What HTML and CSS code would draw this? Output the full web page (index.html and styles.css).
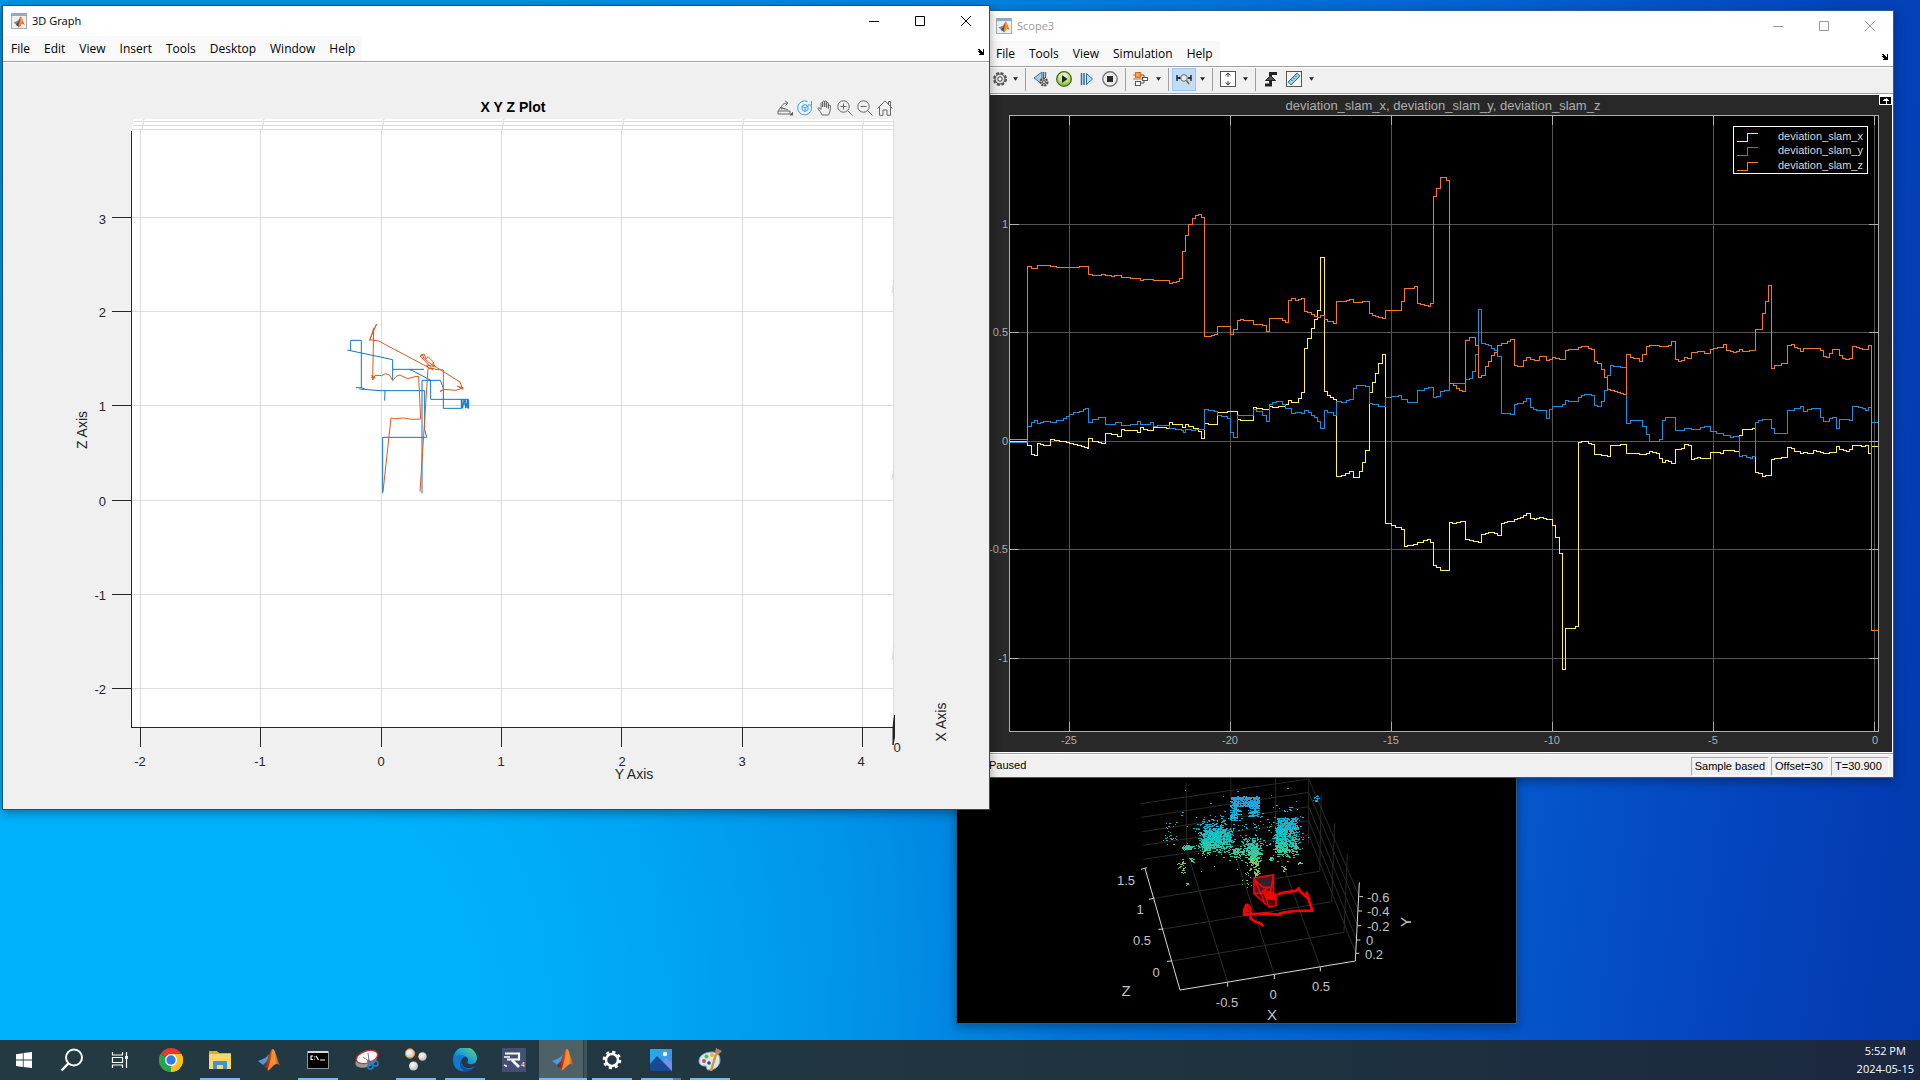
FILE: index.html
```html
<!DOCTYPE html>
<html lang="en">
<head>
<meta charset="utf-8">
<title>Desktop</title>
<link rel="stylesheet" href="styles.css">
</head>
<body>
<svg class="defs" aria-hidden="true">
  <defs>
    <linearGradient id="peak" x1="0" y1="0" x2="1" y2="0">
      <stop offset="0" stop-color="#7a1f10"/><stop offset=".4" stop-color="#d8461b"/><stop offset=".6" stop-color="#f9a23a"/><stop offset="1" stop-color="#b52a12"/>
    </linearGradient>
    <linearGradient id="edgeg" x1="0" y1="1" x2="1" y2="0">
      <stop offset="0" stop-color="#0b59a8"/><stop offset=".5" stop-color="#1f9fdc"/><stop offset="1" stop-color="#62dc5c"/>
    </linearGradient>
    <linearGradient id="photo" x1="0" y1="0" x2="1" y2="1">
      <stop offset="0" stop-color="#22aef0"/><stop offset="1" stop-color="#4b87dd"/>
    </linearGradient>
    <radialGradient id="ball" cx=".4" cy=".35" r=".7">
      <stop offset="0" stop-color="#fff"/><stop offset="1" stop-color="#b9b9b9"/>
    </radialGradient>
    <radialGradient id="green" cx=".5" cy=".3" r=".7">
      <stop offset="0" stop-color="#f4fbe6"/><stop offset=".6" stop-color="#b9e07a"/><stop offset="1" stop-color="#6fae2a"/>
    </radialGradient>
    <symbol id="matlab" viewBox="0 0 24 24">
      <path d="M1 13 L7 10.500 C9 10 10 8 12 6 L10 15 L6 17 Z" fill="#4a9ad4"/>
      <path d="M6 17 L10 13 L13 5 L11 18 L8 20 Z" fill="#1d4f80"/>
      <path d="M7 18 C11 15 13 1 16 1 C18 1 20 12 23.500 18 C20 15 18 16 16 18 C14 21 12 23 10.500 22.500 C10 20 9 18 7 18 Z" fill="url(#peak)"/>
      <path d="M16 1 C14.500 6 13.500 14 10.500 22.500 C13 22 14 19 16 17 C17 12 16.500 6 16 1 Z" fill="#f58b2b"/>
    </symbol>
    <symbol id="appicon" viewBox="0 0 16 16">
      <rect x=".5" y=".5" width="15" height="15" fill="#eef0f2" stroke="#a3adb8"/>
      <rect x="0" y="0" width="16" height="3" fill="#8fabc9"/>
      <use href="#matlab" x="2" y="3" width="12" height="12"/>
    </symbol>
    <symbol id="dock" viewBox="0 0 8 8">
      <path d="M1 1h2v1h1v1h1v1h1V1h1v6H2V6h1V5H2V4H1V3h1V2H1z" fill="#000"/>
    </symbol>
    <symbol id="caret" viewBox="0 0 6 4"><path d="M0 0H6L3 4Z" fill="#222"/></symbol>
  </defs>
</svg>

<main class="desktop">

  <section class="window cloud" aria-label="Point cloud">
    <svg class="figure" viewBox="957 641 559 382" role="img" aria-label="Point cloud map">
      <svg x="1080" y="770" width="380" height="260" viewBox="0 0 1140 780" class="cloud-art">
        <path class="cloud-grid" d="M223 385L719 304M250 477L755 395M275 573L792 487M443 637L320 240M583 614L455 220M721 592L586 220M318 38L320 240M452 0L455 220M587 0L586 220M181 101L686 27M184 142L686 67M187 185L686 110M190 226L686 152M190 268L686 195M686 0V222M724 72L719 304M764 160L755 395M802 253L792 487M686 27L838 380M686 67L836 423M686 110L833 467M686 152L830 510M686 195L828 550"/>
        <path class="cloud-axis" d="M195 295L300 660L826 573L838 337M183 298L201 293M207 388L223 385M235 478L250 477M261 574L275 573M443 637V650M583 614V627M721 592V604M838 380H849M835 423H846M833 467H844M830 510H841M828 550H838"/>
        <g id="points" shape-rendering="crispEdges"></g>
        <path d="M522 324L580 315L581 370L522 370Z" fill="#33202c" stroke="#f00" stroke-width="5"/>
        <path d="M522 324L553 395M580 318L570 375M524 330L550 352H578M522 370L560 405M545 365L566 352M553 360L588 374V406L566 411Z" fill="none" stroke="#f00" stroke-width="5"/>
        <path d="M550 368L588 374L586 392L556 388Z" fill="#f00"/>
        <path d="M566 392H584V406H566Z" fill="#5a0000"/>
        <path class="track" d="M592 373L610 368L650 362L655 355L662 366L684 385L680 368L688 395L697 422L640 423L600 430L594 435L560 430L492 434L493 418L500 404L508 410L512 430L512 446L528 456L540 460L550 468M496 412L504 428M672 374L690 388M580 433H605"/>
      </svg>
      <g class="cloud-labels">
        <text x="1126" y="885" text-anchor="middle">1.5</text>
        <text x="1140" y="914" text-anchor="middle">1</text>
        <text x="1142" y="945" text-anchor="middle">0.5</text>
        <text x="1156" y="977" text-anchor="middle">0</text>
        <text x="1227" y="1007" text-anchor="middle">-0.5</text>
        <text x="1273" y="999" text-anchor="middle">0</text>
        <text x="1321" y="991" text-anchor="middle">0.5</text>
        <text x="1367" y="902">-0.6</text>
        <text x="1367" y="916">-0.4</text>
        <text x="1367" y="931">-0.2</text>
        <text x="1366" y="945">0</text>
        <text x="1365" y="959">0.2</text>
      </g>
      <g class="cloud-names">
        <text x="1126" y="996" text-anchor="middle">Z</text>
        <text x="1272" y="1020" text-anchor="middle">X</text>
        <text transform="translate(1411 922) rotate(-90)" text-anchor="middle">Y</text>
      </g>
    </svg>
  </section>

  <section class="window scope" aria-label="Scope3">
    <header class="titlebar inactive">
      <svg class="app" aria-hidden="true"><use href="#appicon"/></svg>
      <h2>Scope3</h2>
      <div class="controls">
        <button aria-label="Minimize"><svg viewBox="0 0 10 10"><path d="M0 5.500H10"/></svg></button>
        <button aria-label="Maximize"><svg viewBox="0 0 10 10"><path d="M.5.5H9.500V9.500H.5Z"/></svg></button>
        <button aria-label="Close"><svg viewBox="0 0 10 10"><path d="M0 0L10 10M10 0L0 10"/></svg></button>
      </div>
    </header>
    <nav class="menubar">
      <div class="menus"><button>File</button><button>Tools</button><button>View</button><button>Simulation</button><button>Help</button></div>
      <button class="dock" aria-label="Dock"><svg><use href="#dock"/></svg></button>
    </nav>
    <div class="toolbar" role="toolbar" aria-label="Scope tools">
      <button aria-label="Configuration"><svg class="ico" viewBox="0 0 16 16"><circle cx="8" cy="8" r="6" fill="none" stroke="#555" stroke-width="2" stroke-dasharray="3 1.700"/><circle cx="8" cy="8" r="5" fill="#ddd" stroke="#444"/><circle cx="8" cy="8" r="2.200" fill="#fff" stroke="#444"/></svg></button>
      <button class="drop" aria-label="Configuration menu"><svg><use href="#caret"/></svg></button>
      <hr>
      <button class="wide" aria-label="Step back"><svg class="ico" viewBox="0 0 16 16"><path d="M1 7L9 1V13Z" fill="#a9cbe8" stroke="#3c6f9c"/><path d="M10.500 1V7M12.500 1V7" stroke="#3c6f9c" stroke-width="1.300"/><circle cx="11" cy="11" r="3.500" fill="#ccc" stroke="#444" stroke-width="2" stroke-dasharray="2 1"/><circle cx="11" cy="11" r="1.500" fill="#fff" stroke="#444"/></svg></button>
      <button class="wide" aria-label="Run"><svg class="ico" viewBox="0 0 16 16"><circle cx="8" cy="8" r="7.300" fill="url(#green)" stroke="#3f6b14" stroke-width="1.300"/><path d="M6 4V12L11.500 8Z" fill="#222"/></svg></button>
      <button class="wide" aria-label="Step forward"><svg class="ico" viewBox="0 0 16 16"><path d="M2.500 2V14M5 2V14" stroke="#2f6c9f" stroke-width="1.500"/><path d="M7.500 2.500V13.500L13.500 8Z" fill="#bcdcf4" stroke="#2f6c9f"/></svg></button>
      <button class="wide" aria-label="Stop"><svg class="ico" viewBox="0 0 16 16"><circle cx="8" cy="8" r="7.200" fill="#ececec" stroke="#777" stroke-width="1.400"/><path d="M5 5H11V11H5Z" fill="#2b2b2b"/></svg></button>
      <hr>
      <button class="wide" aria-label="Signal selector"><svg class="ico" viewBox="0 0 16 16"><path d="M7.500 4H11V6M7.500 12H11V10" fill="none" stroke="#555"/><rect x="2.500" y="1.500" width="5" height="5" fill="#f6a04c" stroke="#d9691a"/><rect x="9.500" y="6.500" width="5" height="3" fill="#fff" stroke="#555"/><rect x="2.500" y="10.500" width="5" height="4" fill="#fff" stroke="#555"/><path d="M0 4H2M0 8H9" stroke="#d9691a"/></svg></button>
      <button class="drop" aria-label="Signal menu"><svg><use href="#caret"/></svg></button>
      <hr>
      <button class="on" aria-label="Zoom X"><svg class="ico" viewBox="0 0 16 16"><path d="M1 4V10M15 4V10M1 7H5M15 7H12" stroke="#111" stroke-width="1.300"/><path d="M3 5.500L5 7L3 8.500" fill="#111"/><circle cx="8" cy="7" r="3.300" fill="#dff0fb" stroke="#666"/><path d="M10.500 9.500L13 13" stroke="#8b5a2b" stroke-width="1.500"/></svg></button>
      <button class="drop" aria-label="Zoom menu"><svg><use href="#caret"/></svg></button>
      <hr>
      <button class="wide" aria-label="Scale axes"><svg class="ico" viewBox="0 0 16 16"><rect x=".5" y=".5" width="15" height="15" fill="#fff" stroke="#555"/><path d="M8 2V6M8 10V14M5.500 4.500L8 2L10.500 4.500M5.500 11.500L8 14L10.500 11.500" fill="none" stroke="#333"/></svg></button>
      <button class="drop" aria-label="Scale menu"><svg><use href="#caret"/></svg></button>
      <hr>
      <button class="wide" aria-label="Triggers"><svg class="ico" viewBox="0 0 16 16"><path d="M2 14H7.500V2.500H14" fill="none" stroke="#222" stroke-width="3"/><path d="M2.500 9.500L7.500 4.500L12.500 9.500Z" fill="#555" stroke="#222"/></svg></button>
      <button class="wide" aria-label="Measurements"><svg class="ico" viewBox="0 0 16 16"><rect x=".5" y=".5" width="15" height="15" fill="#f4f4f4" stroke="#555"/><path d="M2 11L11 2L14 5L5 14Z" fill="#9fd0ea" stroke="#2d6f97"/><path d="M5 8.500L6.500 10M7 6.500L8.500 8M9 4.500L10.500 6" stroke="#2d6f97"/></svg></button>
      <button class="drop" aria-label="Measurements menu"><svg><use href="#caret"/></svg></button>
    </div>
    <div class="scope-view">
      <svg class="figure" viewBox="988 95 904 657" role="img" aria-label="deviation_slam_x, deviation_slam_y, deviation_slam_z">
        <rect x="1009" y="115" width="870" height="617" fill="#000"/>
        <g shape-rendering="crispEdges">
          <path class="scope-grid" d="M1069.500 116V731M1230.500 116V731M1391.500 116V731M1552.500 116V731M1713.500 116V731M1874.500 116V731M1010 224.500H1878M1010 332.500H1878M1010 441.500H1878M1010 549.500H1878M1010 658.500H1878"/>
          <path class="scope-axis" d="M1009.500 115.500H1878.500V731.500H1009.500ZM1069.500 116v9m0 597v9M1230.500 116v9m0 597v9M1391.500 116v9m0 597v9M1552.500 116v9m0 597v9M1713.500 116v9m0 597v9M1874.500 116v9m0 597v9M1010 224.500h9m850 0h9M1010 332.500h9m850 0h9M1010 441.500h9m850 0h9M1010 549.500h9m850 0h9M1010 658.500h9m850 0h9"/>
        </g>
        <svg class="series" x="990" y="160" width="460" height="320" viewBox="0 0 1380 960">
          <path class="sx" d="M59 844H113V856H124V883H134V886H142V850H151V853H160V856H182V838H194V841H209V844H229V847H238V850H250V853H262V856H274V859H284V862H293V865H296V835H307V844H325V847H334V850H346V820H364V823H382V829H394V808H403V811H442V817H451V802H460V808H472V811H490V802H530V805H538V787H547V793H577V802H586V793H595V799H610V805H625V814H634V835H644V790H655V793H683V757H713V754H743V778H752V781H791V742H800V745H818V748H838V739H848V742H866V739H887V733H895V721H904V727H925V715H934V697H944V565H953V535H964V505H973V478H982V451H991V292H1004V694H1013V706H1022V712H1031V718H1040V949H1055V946H1067V940H1079V934H1091V952H1109V934H1118V907H1127V871H1139V697H1148V667H1157V640H1166V610H1178V583H1187V1090H1205V1096H1215V1101H1234V1108H1243V1160H1253V1157H1271V1152H1282V1146H1300V1142H1313V1139H1320V1144"/>
          <path class="sy" d="M59 847H113V799H124V787H133V781H142V790H151V787H160V784H182V787H200V781H220V775H229V769H238V763H250V757H268V753H280V747H286V745H296V787H307V778H325V772H346V793H376V787H394V796H421V793H442V784H451V793H481V787H490V799H502V796H538V805H556V808H574V811H580V817H586V808H604V811H616V808H644V748H655V751H674V754H683V766H695V769H713V775H722V817H731V832H743V766H791V748H800V754H818V766H830V784H838V733H848V727H860V724H878V733H887V745H904V760H916V757H934V760H944V751H955V757H964V766H973V772H982V784H991V805H1004V751H1013V757H1031V766H1040V724H1055V727H1070V721H1079V718H1091V685H1100V676H1127V679H1139V730H1148V733H1166V739H1187V712H1205V709H1226V706H1235V718H1253V727H1283V691H1304V685H1316V682H1331V712H1340V709H1352V694H1363V691H1378V670"/>
          <path class="sz" d="M59 838H113V319H124V325H142V316H182V319H200V322H268V319H296V343H307V346H334V343H346V346H364V349H373V346H394V352H421V355H451V361H460V358H490V361H538V370H547V367H558V364H568V355H577V274H586V226H595V193H607V175H616V166H625V163H634V172H644V529H664V526H674V523H683V499H722V523H731V508H743V481H752V478H761V481H791V493H818V496H830V514H838V475H878V481H887V487H895V421H904V415H916V421H925V418H934V415H944V454H953V457H964V463H973V469H982V472H991V466H1004V478H1013V484H1031V490H1040V424H1070V421H1079V418H1091V427H1118V424H1139V460H1148V466H1157V469H1166V472H1178V475H1187V451H1235V424H1244V385H1274V379H1283V430H1292V433H1304V436H1316V439H1322V430H1331V109H1340V85H1352V52H1370V61H1378V670"/>
        </svg>
        <svg class="series" x="1430" y="280" width="460" height="400" viewBox="0 0 1380 1200">
          <path class="sx" d="M0 782V788H10V856H20V862H31V871H58V727H67V730H79V727H91V724H107V778H118V781H130V784H146V787H155V763H166V760H176V757H194V760H203V766H214V730H223V727H232V724H254V718H263V715H272V712H281V706H290V700H301V715H313V718H319V715H328V712H340V715H350V718H368V736H376V772H388V820H397V1168H407V1045H436V1039H446V487H455V484H475V490H484V493H494V523H514V526H532V529H541V496H571V493H589V520H628V523H650V520H658V514H668V517H680V520H689V535H698V547H707V541H716V544H725V550H737V508H755V505H764V493H776V496H784V538H793V535H803V532H812V535H841V517H871V520H880V511H913V514H928V466H937V448H967V445H976V577H985V580H997V589H1006V586H1024V538H1034V535H1054V532H1072V502H1084V505H1093V514H1111V520H1120V517H1132V520H1150V511H1160V514H1171V517H1180V520H1198V517H1219V499H1228V508H1240V511H1249V514H1258V508H1267V496H1293V499H1306V496H1315V520H1324V499H1345"/>
          <path class="sy" d="M58 331V310H107V298H118V295H128V274H137V223H146V88H155V190H166V193H176V196H185V205H194V211H203V229H214V400H241V403H254V373H263V370H280V364H290V355H301V382H310V388H319V391H350V415H359V388H368V379H397V373H407V361H416V364H446V352H455V346H464V343H485V346H494V376H503V379H514V364H523V331H532V286H541V256H550V259H571V262H589V430H601V421H637V439H650V463H658V484H689V478H698V421H707V412H737V451H764V445H784V448H812V442H823V439H841V454H860V460H880V466H901V472H910V469H928V529H937V526H949V532H961V535H967V529H976V427H985V421H997V418H1024V445H1034V460H1072V391H1093V385H1111V379H1120V394H1132V388H1144V385H1171V412H1180V424H1198V415H1207V412H1219V445H1228V418H1258V421H1267V379H1285V382H1297V385H1306V391H1315V382H1324V427H1345"/>
          <path class="sz" d="M58 310H70V316H79V325H88V331H97V334H107V181H118V172H137V196H146V292H155V286H166V259H176V244H185V226H194V217H203V196H214V190H232V184H241V178H254V256H263V259H280V241H290V232H301V238H313V241H328V229H350V241H359V238H368V232H376V235H388V238H407V211H416V208H446V202H455V199H475V205H484V208H494V244H503V250H514V268H523V292H532V328H541V331H553V334H562V337H571V340H580V343H589V223H601V232H610V235H628V244H637V223H650V199H658V196H689V199H716V196H725V184H737V238H746V244H755V241H764V232H773V235H784V217H803V214H823V220H841V208H850V205H862V202H880V193H889V211H901V214H910V217H919V214H928V208H937V214H958V211H976V148H997V100H1006V64H1015V16H1024V265H1034V256H1054V250H1072V196H1084V193H1093V202H1102V205H1111V214H1120V205H1171V211H1180V229H1189V232H1198V220H1207V208H1228V226H1237V235H1246V238H1258V235H1267V199H1279V202H1288V205H1297V208H1315V196H1324V1051H1345"/>
        </svg>
        <text class="scope-title" x="1443" y="110" text-anchor="middle">deviation_slam_x, deviation_slam_y, deviation_slam_z</text>
        <g class="scope-ticks">
          <text x="1008" y="228" text-anchor="end">1</text>
          <text x="1008" y="336" text-anchor="end">0.5</text>
          <text x="1008" y="445" text-anchor="end">0</text>
          <text x="1008" y="553" text-anchor="end">-0.5</text>
          <text x="1008" y="662" text-anchor="end">-1</text>
          <text x="1069" y="744" text-anchor="middle">-25</text>
          <text x="1230" y="744" text-anchor="middle">-20</text>
          <text x="1391" y="744" text-anchor="middle">-15</text>
          <text x="1552" y="744" text-anchor="middle">-10</text>
          <text x="1713" y="744" text-anchor="middle">-5</text>
          <text x="1875" y="744" text-anchor="middle">0</text>
        </g>
        <g class="legend">
          <rect x="1733.500" y="126.500" width="134" height="47" fill="#000" stroke="#fff"/>
          <path class="sx" d="M1737 141.500H1747.500V133.500H1758"/>
          <path class="sy" d="M1737 155.500H1747.500V147.500H1758"/>
          <path class="sz" d="M1737 170.500H1747.500V162.500H1758"/>
          <text x="1863" y="140" text-anchor="end">deviation_slam_x</text>
          <text x="1863" y="154" text-anchor="end">deviation_slam_y</text>
          <text x="1863" y="169" text-anchor="end">deviation_slam_z</text>
        </g>
        <g shape-rendering="crispEdges">
          <rect x="1879" y="95" width="13" height="10" fill="#fff"/>
          <path d="M1880 97h11v7h-11z" fill="#000"/>
          <path d="M1885 99h1v-1h1v1h1v1h1v1h-2v3h-1v-3h-3v-1h1v-1z" fill="#fff"/>
        </g>
      </svg>
    </div>
    <footer class="status">
      <span class="state">Paused</span>
      <span class="cell">Sample based</span>
      <span class="cell">Offset=30</span>
      <span class="cell">T=30.900</span>
    </footer>
  </section>

  <section class="window graph" aria-label="3D Graph">
    <header class="titlebar">
      <svg class="app" aria-hidden="true"><use href="#appicon"/></svg>
      <h2>3D Graph</h2>
      <div class="controls">
        <button aria-label="Minimize"><svg viewBox="0 0 10 10"><path d="M0 5.500H10"/></svg></button>
        <button aria-label="Maximize"><svg viewBox="0 0 10 10"><path d="M.5.5H9.500V9.500H.5Z"/></svg></button>
        <button aria-label="Close"><svg viewBox="0 0 10 10"><path d="M0 0L10 10M10 0L0 10"/></svg></button>
      </div>
    </header>
    <nav class="menubar">
      <div class="menus"><button>File</button><button>Edit</button><button>View</button><button>Insert</button><button>Tools</button><button>Desktop</button><button>Window</button><button>Help</button></div>
      <button class="dock" aria-label="Dock"><svg><use href="#dock"/></svg></button>
    </nav>
    <div class="graph-view">
      <svg class="figure" viewBox="3 63 986 746" role="img" aria-label="X Y Z Plot">
        <path d="M134 119H894V727H131V131Z" fill="#fff"/>
        <g shape-rendering="crispEdges">
          <path class="grid" d="M140.500 130V727M260.500 130V727M381.500 130V727M501.500 130V727M621.500 130V727M742.500 130V727M862.500 130V727M893.500 119V727M132 217.500H893M132 311.500H893M132 405.500H893M132 500.500H893M132 594.500H893M132 688.500H893M134 121.500H894M133 125.500H894M132 129.500H894"/>
          <path class="axis" d="M131.500 131V727.500H893M112 217.500H131M112 311.500H131M112 405.500H131M112 500.500H131M112 594.500H131M112 688.500H131M140.500 728V747M260.500 728V747M381.500 728V747M501.500 728V747M621.500 728V747M742.500 728V747M862.500 728V747"/>
        </g>
        <path class="grid" d="M142 130L144 119M262 130L264 119M382 130L384 119M502 130L504 119M622 130L624 119M742 130L744 119M862 130L864 119M892 293L894 280M892 480L894 465M892 660L894 645"/>
        <path d="M893 727L894.500 715V737L893 745Z" fill="#222" stroke="#222"/>
        <svg x="300" y="300" width="200" height="220" viewBox="0 0 600 660" class="trace">
          <path class="ty" d="M248 580V412H380L374 388V272H240L178 267M168 263H184L197 268M255 272L254 302M184 264V121H152V151M142 150L278 179V240M278 208H372M328 209L338 212L392 241V298H506V326M366 580V241H421L430 265V325H484V298M484 300L488 325L492 298L498 324L502 300L505 325M488 312H496M486 298V325M496 298V325M503 298V325"/>
          <path class="tz" d="M249 575L273 354L284 356L310 354L335 358L362 357L356 229L345 230L322 236L300 225L290 228L278 242L268 225L256 221L245 227L225 226L218 240L221 85L209 122L214 108L230 72L222 88M209 119L236 123L400 210L386 195L360 168L372 162L378 177L384 170L400 186L398 196L372 176L366 162L360 170M400 186L404 200L380 195L386 206L404 205M400 196L480 246L488 268L472 258L490 264L466 271L432 268L420 274L430 270V210L404 208M384 206L360 575M212 226L226 234L214 232"/>
        </svg>
        <g class="ticks">
          <text x="106" y="224" text-anchor="end">3</text>
          <text x="106" y="317" text-anchor="end">2</text>
          <text x="106" y="411" text-anchor="end">1</text>
          <text x="106" y="506" text-anchor="end">0</text>
          <text x="106" y="600" text-anchor="end">-1</text>
          <text x="106" y="694" text-anchor="end">-2</text>
          <text x="140" y="766" text-anchor="middle">-2</text>
          <text x="260" y="766" text-anchor="middle">-1</text>
          <text x="381" y="766" text-anchor="middle">0</text>
          <text x="501" y="766" text-anchor="middle">1</text>
          <text x="622" y="766" text-anchor="middle">2</text>
          <text x="742" y="766" text-anchor="middle">3</text>
          <text x="861" y="766" text-anchor="middle">4</text>
          <text x="897" y="752" text-anchor="middle">0</text>
        </g>
        <g class="names">
          <text class="plot-title" x="513" y="112" text-anchor="middle">X Y Z Plot</text>
          <text x="634" y="779" text-anchor="middle">Y Axis</text>
          <text transform="translate(946 722) rotate(-90)" text-anchor="middle">X Axis</text>
          <text transform="translate(87 430) rotate(-90)" text-anchor="middle">Z Axis</text>
        </g>
      </svg>
      <div class="plot-tools">
        <button aria-label="Export"><svg viewBox="0 0 16 16"><path d="M1 11H13V14H1ZM1 11L4 7L8 9M4 9C4 5 7 3 10 3M8 .8L11 3L8.500 5.500M4 9C6 8 9 9 11 10"/><path d="M13 15h3v-3z" fill="#555"/></svg></button>
        <button class="active" aria-label="Rotate 3D"><svg viewBox="0 0 16 16"><path d="M10.500 1.500A7 7 0 1 0 14 5M14.500 1V5H11M8 4.500L11 6.200V9.800L8 11.500L5 9.800V6.200ZM5 6.200L8 8L11 6.200M8 8V11.500"/></svg></button>
        <button aria-label="Pan"><svg viewBox="0 0 16 16"><path d="M5 15C4 12 2 10.500.8 8.500C1.500 7.300 3 8 4 9.500V3.500C4 2.300 5.700 2.300 5.700 3.500V7V2C5.700.6 7.700.6 7.700 2V7V2C7.700.6 9.700.6 9.700 2V7.500V3.500C9.700 2.300 11.500 2.300 11.500 3.500V8.500V6C12 5 13.500 5 13.500 6C13.500 10 13 12 11.500 15Z"/></svg></button>
        <button aria-label="Zoom in"><svg viewBox="0 0 16 16"><circle cx="6.500" cy="6.500" r="5.700"/><path d="M10.700 10.700L15.500 15.500M3.500 6.500H9.500M6.500 3.500V9.500"/></svg></button>
        <button aria-label="Zoom out"><svg viewBox="0 0 16 16"><circle cx="6.500" cy="6.500" r="5.700"/><path d="M10.700 10.700L15.500 15.500M3.500 6.500H9.500"/></svg></button>
        <button aria-label="Restore view"><svg viewBox="0 0 16 16"><path d="M.5 8.500L8 .8L15.500 8.500M11.500 4.500V1.500H13.500V6.500M2.500 7V15.300H6V10H10V15.300H13.500V7"/></svg></button>
      </div>
    </div>
  </section>
</main>

<footer class="taskbar">
  <button aria-label="Start"><svg viewBox="0 0 24 24"><path d="M4 6.200L10.800 5.200V11.600H4ZM11.600 5.100L20 4V11.600H11.600ZM4 12.400H10.800V18.900L4 17.900ZM11.600 12.400H20V20L11.600 19Z" fill="#fff"/></svg></button>
  <button aria-label="Search"><svg viewBox="0 0 24 24"><circle cx="14" cy="9.500" r="8" fill="none" stroke="#fff" stroke-width="2"/><path d="M8.300 15.500L1.500 22.500" stroke="#fff" stroke-width="2.500"/></svg></button>
  <button aria-label="Task view"><svg viewBox="0 0 24 24"><path d="M4.500 4V7H14.500V4M4.500 20V17H14.500V20M4.500 9.500H14.500V14.500H4.500ZM18.500 4V20" fill="none" stroke="#fff" stroke-width="1.200"/><path d="M17 8H20V11H17Z" fill="#fff"/></svg></button>
  <div class="apps">
    <button aria-label="Chrome"><svg viewBox="0 0 24 24"><path d="M12 12L1.600 6A12 12 0 0 1 22.400 6Z" fill="#e33b2e"/><path d="M12 12L22.400 6A12 12 0 0 1 12 24Z" fill="#fbc116"/><path d="M12 12L12 24A12 12 0 0 1 1.600 6Z" fill="#2ba24c"/><path d="M12 6H22.400A12 12 0 0 1 12 24L17.200 15Z" fill="#fbc116"/><path d="M1.600 6L6.800 15L12 18L12 24A12 12 0 0 1 1.600 6Z" fill="#2ba24c"/><circle cx="12" cy="12" r="6" fill="#fff"/><circle cx="12" cy="12" r="4.700" fill="#2d7bf0"/></svg></button>
    <button class="open" aria-label="File Explorer"><svg viewBox="0 0 24 24"><path d="M1 3H9L11 5H23V21H1Z" fill="#e9a91c"/><path d="M1 6H23V21H1Z" fill="#fbd668"/><path d="M5 21V13H19V21H15V17H9V21Z" fill="#3a94d6"/></svg></button>
    <button aria-label="MATLAB"><svg viewBox="0 0 24 24"><use href="#matlab"/></svg></button>
    <button class="open" aria-label="Command Prompt"><svg viewBox="0 0 24 24"><rect x="1.500" y="3.500" width="21" height="17" fill="#000" stroke="#8d9296"/><path d="M2 3H22V5H2Z" fill="#d5d8da"/><path d="M7 8H5V11.500H7M8.500 8.500V9.300M8.500 10.700V11.500M10 8L12.500 12M14 12H19" fill="none" stroke="#fff" stroke-width="1.200"/></svg></button>
    <button aria-label="Snipping Tool"><svg viewBox="0 0 24 24"><ellipse cx="11" cy="13" rx="11" ry="6" fill="#9a9a9a" transform="rotate(-18 11 13)"/><ellipse cx="12" cy="9" rx="11" ry="6" fill="#fff" stroke="#d42f32" stroke-width="1.300" transform="rotate(-18 12 9)"/><path d="M8 9L15 14M13 5L14 14" stroke="#777"/><g fill="none" stroke="#1b7fc4" stroke-width="1.700"><circle cx="15.500" cy="18.500" r="2.500"/><circle cx="20.500" cy="15.500" r="2.500"/><path d="M12 13L19 14M13.500 12L16 16.500"/></g></svg></button>
    <button class="open" aria-label="Molecule viewer"><svg viewBox="0 0 24 24"><path d="M6 6L13 11L19 8M13 11L10 18" stroke="#333" stroke-width="4"/><circle cx="12" cy="11" r="4" fill="#333"/><circle cx="6" cy="5.500" r="4.700" fill="url(#ball)" stroke="#e08a24"/><circle cx="18.500" cy="8.500" r="4.200" fill="url(#ball)"/><circle cx="9.500" cy="18" r="4.500" fill="url(#ball)"/></svg></button>
    <button class="open" aria-label="Edge"><svg viewBox="0 0 24 24"><path d="M0 12A12 12 0 0 1 24 10C24 15 20 17 16 16C14 15.500 14 14.500 15 13C16 9 10 6 5 9C2 10.500 1 12 0 12Z" fill="url(#edgeg)"/><path d="M0 12C2 7 9 6 13 9C8 9 7 14 10 18C13 21 18 21 22 18C16 27 0 25 0 12Z" fill="#1279cf"/><path d="M9 11C6 17 11 22 17 21C20 20.500 21.500 19 22 18C15 30 2 20 9 11Z" fill="#0c4f9d"/></svg></button>
    <button aria-label="R4"><svg viewBox="0 0 24 24"><rect width="24" height="24" fill="#435073"/><path d="M3 5.500H17V11.500H5" fill="none" stroke="#fff" stroke-width="2.200"/><path d="M10 12L17 19" stroke="#fff" stroke-width="2.600"/><path d="M2 9H8M2 17L5 18.500" stroke="#fff" stroke-width="1.500"/><text x="19" y="19" font-size="7" fill="#fff" font-family="Liberation Sans, sans-serif">4</text></svg></button>
    <button class="open current" aria-label="MATLAB figures"><svg viewBox="0 0 24 24"><use href="#matlab"/></svg></button>
    <button class="open" aria-label="Settings"><svg viewBox="0 0 24 24"><circle cx="12" cy="12" r="6" fill="none" stroke="#fff" stroke-width="2.500"/><circle cx="12" cy="12" r="8" fill="none" stroke="#fff" stroke-width="2.600" stroke-dasharray="3.140 3.140"/></svg></button>
    <button class="open pair" aria-label="Photos"><svg viewBox="0 0 24 24"><rect x="1" y="1" width="22" height="22" fill="url(#photo)"/><path d="M11 16L17 10L23 15V23H11Z" fill="#7a8fe8"/><path d="M1 16L8 8L23 23H1Z" fill="#174a94"/><circle cx="16" cy="6" r="2.200" fill="#fff"/></svg></button>
    <button class="open" aria-label="Paint"><svg viewBox="0 0 24 24"><path d="M1 13C1 7 8 4 14 4C20 4 22 8 22 12C22 18 17 22 11 22C7 22 10 18 7 18C3 18 1 16 1 13Z" fill="#d5e8f4" stroke="#79a9c9"/><circle cx="6" cy="13" r="2" fill="#e1483b"/><circle cx="8.500" cy="8.500" r="2" fill="#5fb548"/><circle cx="14" cy="7" r="2" fill="#f5b51c"/><circle cx="11" cy="15" r="1.800" fill="#1d4f80"/><path d="M13 23L18 6" stroke="#e29427" stroke-width="2.500"/><path d="M17 5L18 0L24 3L20 7Z" fill="#b98355"/></svg></button>
  </div>
  <time class="clock" datetime="2024-05-15T17:52"><span>5:52 PM</span><span>2024-05-15</span></time>
</footer>
<script src="cloud.js"></script>
</body>
</html>
```
FILE: styles.css
```css
* { box-sizing: border-box; }

body {
  margin: 0;
  min-height: 100vh;
  display: flex;
  flex-direction: column;
  overflow: hidden;
  font: 11px/16px "Open Sans", "Noto Sans", sans-serif;
  color: #000;
  background:
    radial-gradient(ellipse 46% 80% at 10% 94%, rgba(0, 178, 252, 1) 30%, rgba(0, 170, 250, 0)),
    linear-gradient(97deg, #0094e8 0%, #0094e8 25%, #0084e0 46%, #0460d2 74%, #0444bc 90%, #0339ae 100%);
}

h2 { margin: 0; font: inherit; }

button {
  padding: 0;
  border: 0;
  background: none;
  font: inherit;
  color: inherit;
}

svg { display: block; }
.defs { position: absolute; width: 0; height: 0; }

.desktop { flex: 1; position: relative; }

/* Windows */
.window {
  position: absolute;
  border: 1px solid #1d4f78;
  box-shadow: 0 3px 10px rgba(0, 0, 0, .35);
}
.graph { left: 2px; top: 5px; width: 988px; }
.scope { left: 987px; top: 10px; width: 907px; border-color: #2a5c9c; }
.cloud { left: 956px; top: 640px; width: 561px; background: #000; border-color: #2a5c80; }

.figure { width: 100%; height: auto; font-family: "Liberation Sans", Arial, sans-serif; }

.titlebar {
  display: flex;
  align-items: center;
  height: 30px;
  padding-left: 8px;
  background: #fff;
}
.app { width: 16px; height: 16px; margin-right: 5px; }
.controls { display: flex; margin-left: auto; }
.controls button { width: 46px; height: 30px; display: grid; place-items: center; }
.controls svg { width: 10px; height: 10px; fill: none; stroke: #000; stroke-width: 1; overflow: visible; }
.inactive { color: #999; }
.inactive .controls svg { stroke: #999; }

.menubar {
  display: flex;
  justify-content: space-between;
  height: 27px;
  background: #fff;
  border-bottom: 1px solid #fff;
  box-shadow: inset 0 -1px #a0a0a0;
}
.menus { display: flex; height: 25px; padding-left: 1px; background: #f9f9f9; font-size: 12px; }
.menus button { padding: 0 7px; }
.dock { padding: 6px 4px 0; }
.dock svg { width: 8px; height: 8px; }

.toolbar {
  display: flex;
  align-items: center;
  height: 27px;
  padding: 0 0 4px 3px;
  background: #f0f0f0;
  border-bottom: 1px solid #fff;
  box-shadow: inset 0 -1px #a0a0a0;
}
.toolbar .ico { width: 16px; height: 16px; margin: auto; }
.toolbar button { width: 18px; height: 23px; }
.toolbar .wide { width: 23px; }
.toolbar .drop { width: 12px; }
.drop svg { width: 5px; height: 4px; margin: auto; }
.toolbar hr { width: 1px; height: 23px; margin: 0 3px 0 4px; border: 0; background: #a0a0a0; }
.toolbar .on { width: 24px; background: #c2dcf2; border: 1px solid #90c8f6; }

/* Scope */
.scope-view { background: #282828; border-right: 1px solid #fff; }
.scope-grid { stroke: #545454; fill: none; }
.scope-axis { stroke: #afafaf; fill: none; }
.series { shape-rendering: crispEdges; stroke-width: 3; overflow: visible; }
.sx, .sy, .sz { fill: none; }
.sx { stroke: #ffed6b; }
.sy { stroke: #268cdd; }
.sz { stroke: #f57729; }
.scope-title { font-size: 13px; fill: #afafaf; }
.scope-ticks { font-size: 11px; fill: #afafaf; }
.legend { font-size: 11px; fill: #d8d8d8; shape-rendering: crispEdges; }

.status {
  display: flex;
  gap: 2px;
  height: 25px;
  padding: 5px 4px 1px 1px;
  background: linear-gradient(#fff 1px, #a0a0a0 1px 2px, #fff 2px 3px, #f0f0f0 3px);
  font-family: "Liberation Sans", Arial, sans-serif;
}
.state { margin-right: auto; }
.cell {
  min-width: 58px;
  padding: 0 3px;
  border: 1px solid #fff;
  border-color: #a8a8a8 #fff #fff #a8a8a8;
}

/* 3D graph */
.graph-view { position: relative; background: #f0f0f0; }
.grid { stroke: #dcdcdc; fill: none; }
.axis { stroke: #262626; fill: none; }
.trace { stroke-width: 3; }
.ty { stroke: #0f78c2; fill: none; }
.tz { stroke: #d95a22; fill: none; }
.ticks { font-size: 13px; fill: #262626; }
.names { font-size: 14px; fill: #262626; }
.plot-title { font-weight: bold; fill: #000; }

.plot-tools { position: absolute; top: 37px; right: 96px; display: flex; gap: 4px; }
.plot-tools svg { width: 16px; height: 16px; fill: none; stroke: #666; }
.plot-tools .active svg { stroke: #2ea3f2; }

/* Point cloud */
.cloud-grid { stroke: #2b2b2b; stroke-width: 3; fill: none; }
.cloud-axis { stroke: #d9d9d9; stroke-width: 3; fill: none; }
.cloud-labels { font-size: 13px; fill: #c4c4c4; }
.cloud-names { font-size: 15px; fill: #c4c4c4; }
.track { stroke: #f00; stroke-width: 8; fill: none; stroke-linejoin: round; }

/* Taskbar */
.taskbar {
  display: flex;
  height: 40px;
  background: linear-gradient(90deg, #233a43, #1f343f 60%, #1b2740);
  color: #fff;
}
.taskbar button { width: 48px; height: 40px; display: grid; place-items: center; }
.taskbar svg { width: 24px; height: 24px; }
.apps { display: flex; gap: 1px; margin-left: 3px; }
.apps .open { background: linear-gradient(#76b9ed, #76b9ed) center bottom / 40px 2px no-repeat; }
.apps .current {
  background:
    linear-gradient(#76b9ed, #76b9ed) left bottom / 100% 2px no-repeat,
    linear-gradient(90deg, #4e6068 44px, #2b3f48 44px 45px, #3f525b 45px);
}
.apps .pair {
  background: linear-gradient(90deg, #76b9ed 32px, #4f83ac 32px) center bottom / 40px 2px no-repeat;
}
.clock {
  margin-left: auto;
  padding: 3px 6px 0 0;
  display: grid;
  grid-auto-rows: 18px;
  justify-items: center;
}
```
FILE: cloud.js
```js
// Fills the point cloud with clusters of small points, coloured by height.
(function () {
  var seed = 7;
  function rnd() {
    seed = (seed * 16807) % 2147483647;
    return seed / 2147483647;
  }
  function spread() { return rnd() + rnd() + rnd() - 1.5; }

  // centre x, centre y, half width, half height, points, dense box or soft blob
  var clusters = [
    [493, 94, 42, 15, 420, "box"], [466, 122, 15, 22, 90, "blob"], [520, 122, 16, 16, 100, "box"], [460, 138, 10, 12, 50, "box"],
    [404, 200, 50, 46, 620, "blob"], [410, 206, 42, 28, 380, "box"], [375, 228, 18, 18, 90, "blob"], [468, 246, 18, 16, 100, "blob"],
    [515, 240, 24, 34, 330, "blob"], [522, 262, 14, 22, 130, "box"], [528, 296, 8, 22, 30, "box"],
    [622, 160, 30, 18, 280, "box"], [602, 208, 18, 38, 420, "box"], [640, 205, 22, 40, 180, "blob"], [620, 246, 32, 14, 90, "box"],
    [270, 195, 22, 40, 26, "blob"], [320, 232, 15, 10, 50, "blob"], [306, 288, 14, 22, 26, "blob"], [335, 268, 8, 6, 12, "blob"],
    [323, 340, 4, 4, 8, "blob"], [707, 84, 8, 14, 18, "blob"], [528, 312, 5, 5, 10, "box"], [610, 296, 6, 7, 12, "blob"],
    [658, 277, 5, 4, 8, "blob"], [573, 267, 6, 6, 14, "box"], [500, 310, 30, 34, 20, "blob"], [540, 190, 90, 60, 70, "blob"],
    [620, 170, 60, 90, 60, "blob"], [410, 190, 130, 110, 50, "blob"]
  ];
  var bands = [[116, "#22a3e0"], [180, "#12b4d2"], [218, "#18bfc0"], [242, "#2bc5ac"], [274, "#3fc995"], [900, "#7cc95a"]];
  var paths = bands.map(function () { return ""; });

  clusters.forEach(function (c) {
    for (var i = 0; i < c[4]; i++) {
      var u = c[5] === "box" ? rnd() * 2 - 1 : spread();
      var v = c[5] === "box" ? rnd() * 2 - 1 : spread();
      var x = Math.round((c[0] + u * c[2]) / 3) * 3;
      var y = Math.round((c[1] + v * c[3]) / 3) * 3;
      var w = rnd() < .4 ? 6 : 3;
      var tone = y + spread() * 10;
      var k = 0;
      while (tone > bands[k][0]) k++;
      paths[k] += "M" + x + " " + y + "h" + w + "v3h-" + w + "z";
    }
  });

  var group = document.getElementById("points");
  paths.forEach(function (d, k) {
    var p = document.createElementNS("http://www.w3.org/2000/svg", "path");
    p.setAttribute("d", d);
    p.setAttribute("fill", bands[k][1]);
    group.appendChild(p);
  });
})();
```
